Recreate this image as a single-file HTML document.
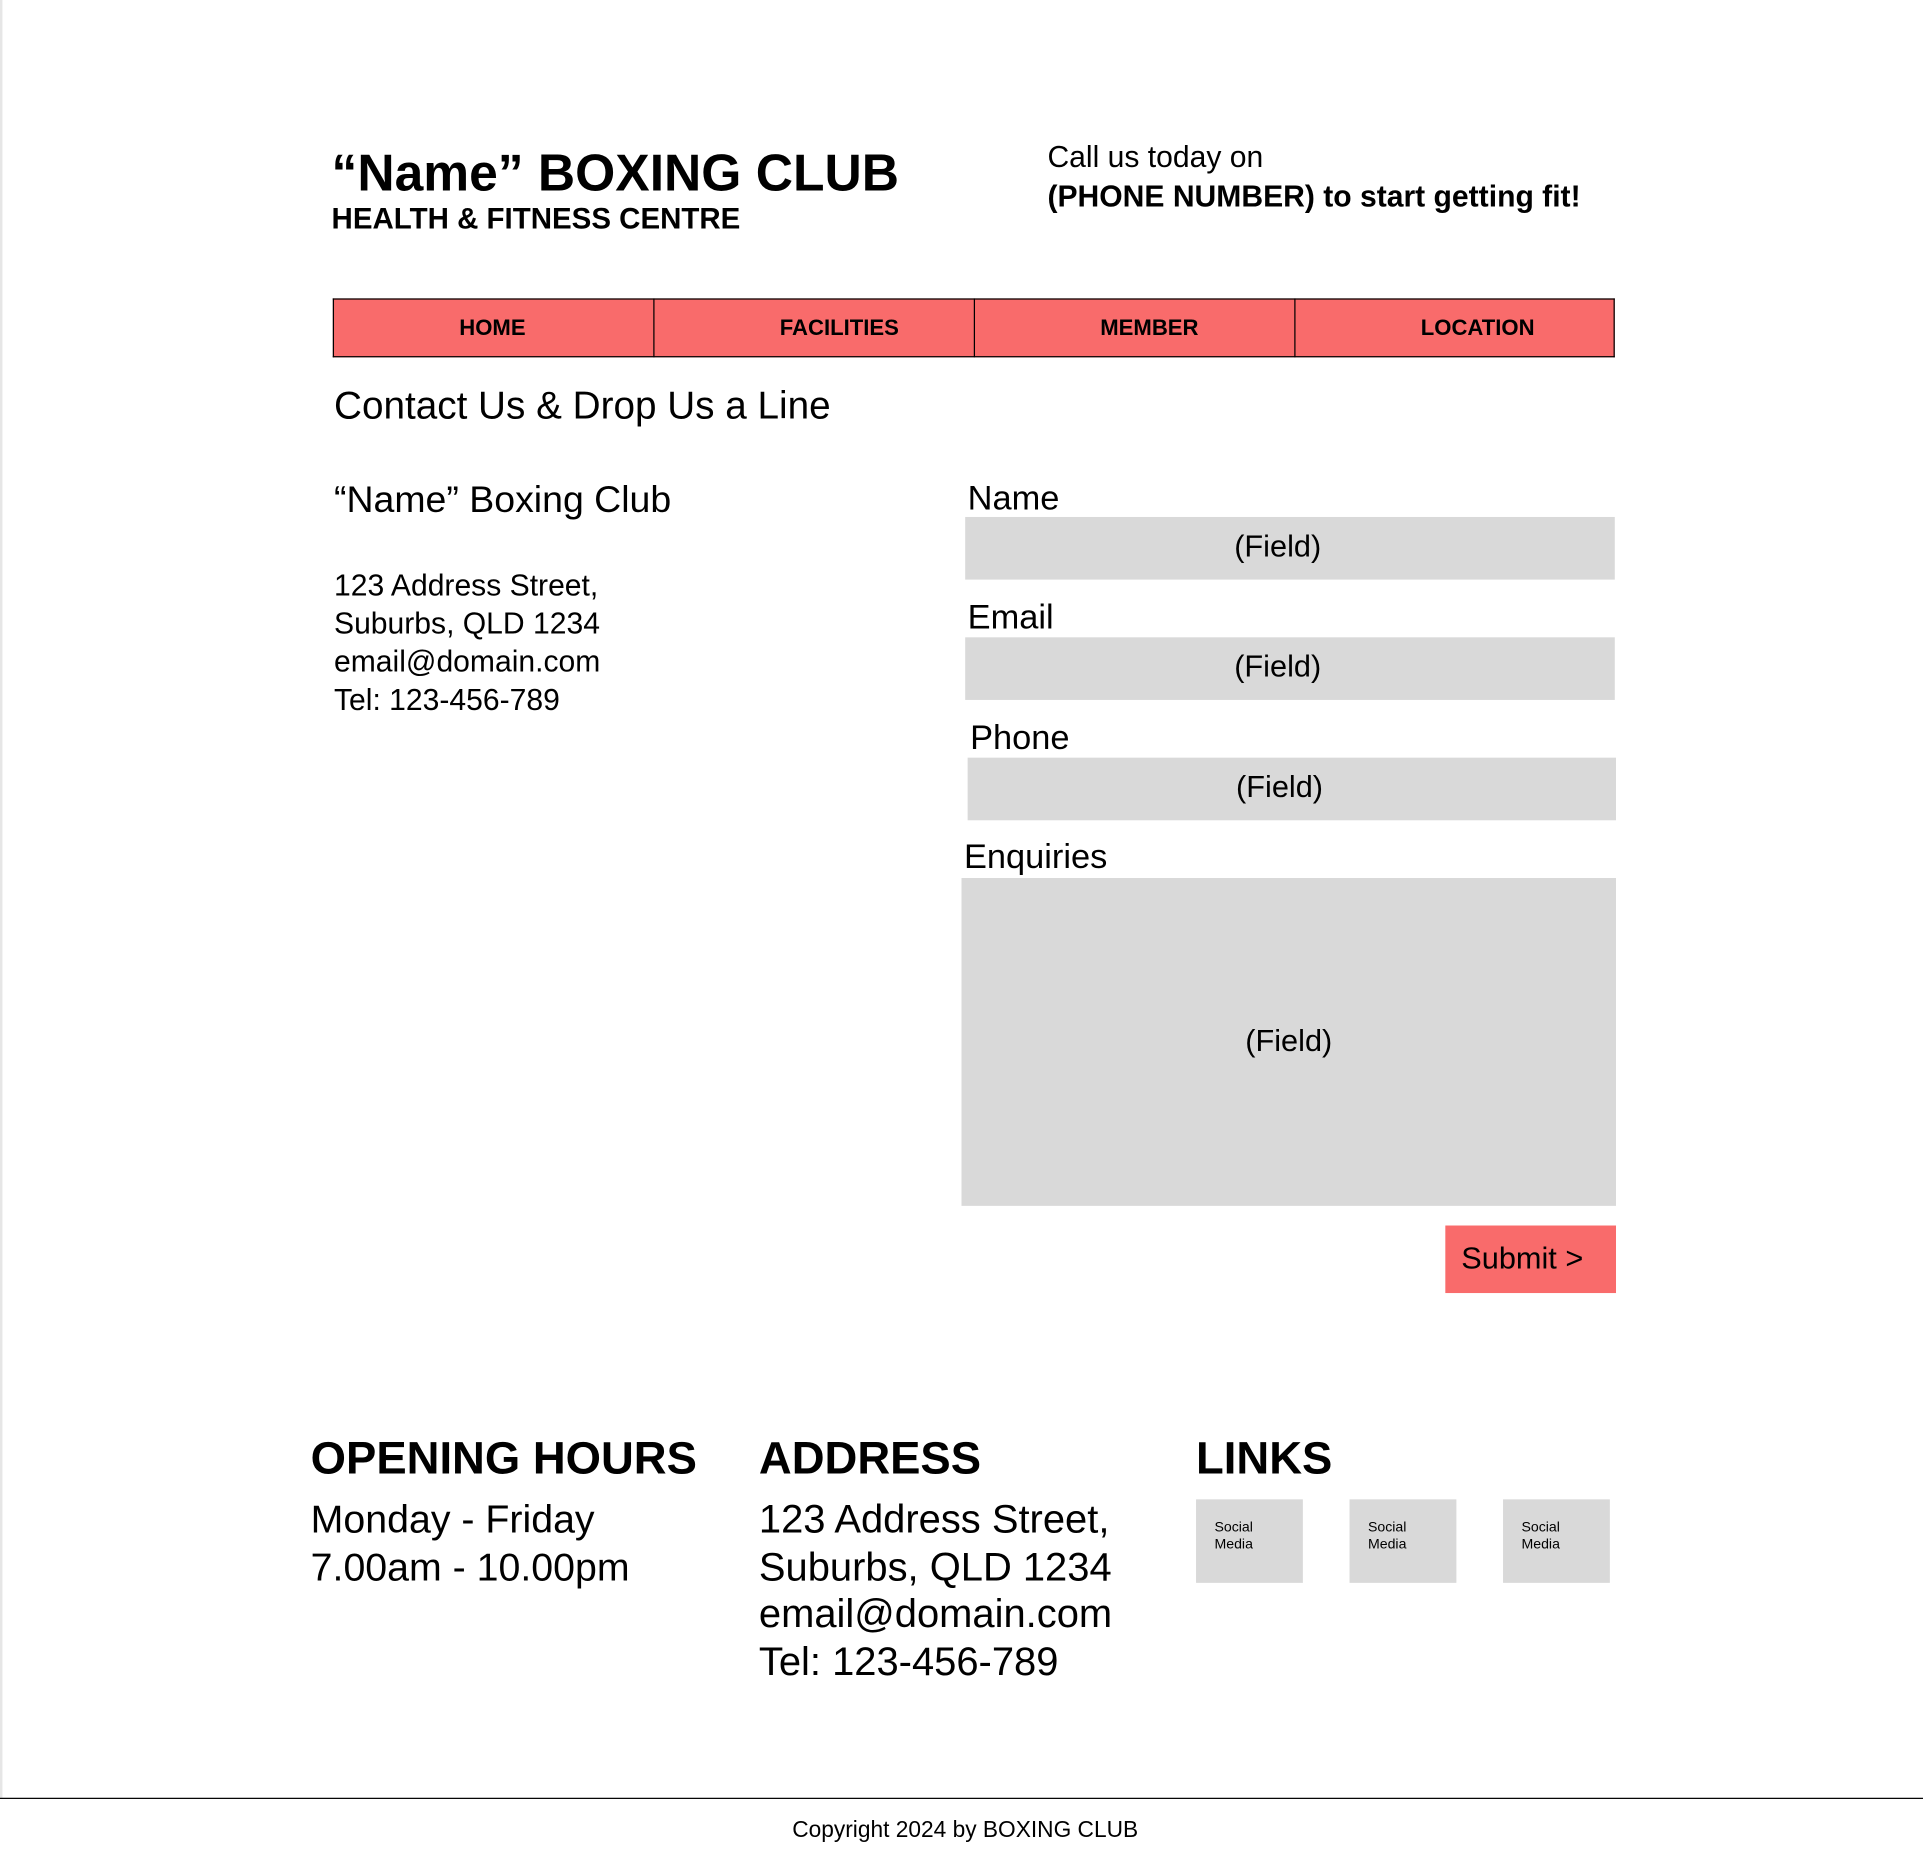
<!DOCTYPE html>
<html><head><meta charset="utf-8"><style>
html,body{margin:0;padding:0;background:#fff;}
body{width:1923px;height:1860px;overflow:hidden;position:relative;font-family:"Liberation Sans",Arial,sans-serif;color:#000;}
#w{position:absolute;left:0;top:0;width:1566px;height:1515px;transform:scale(1.22797);transform-origin:0 0;}
#w div{position:absolute;white-space:nowrap;line-height:1;}
.f{background:#d9d9d9;text-align:center;font-size:25px;}
.nav{top:243px;height:48px;background:#f96b6b;font-weight:bold;font-size:18px;}
.vl{top:243px;height:48px;width:1.2px;background:#000;}
.sm{background:#d9d9d9;width:87px;height:68px;top:1221px;}
.sm span{position:absolute;left:15px;top:16px;font-size:11.5px;line-height:14px;white-space:normal;}
</style></head><body><div id="w">
<div style="left:0;top:0;width:2px;height:1464px;background:#e6e6e6"></div>
<div style="left:270px;top:120px;font-size:42px;font-weight:bold">“Name” BOXING CLUB</div>
<div style="left:270px;top:167px;font-size:24px;font-weight:bold">HEALTH &amp; FITNESS CENTRE</div>
<div style="left:853px;top:117px;font-size:24.5px">Call us today on</div>
<div style="left:853px;top:149px;font-size:24.5px;font-weight:bold">(PHONE NUMBER) to start getting fit!</div>

<div class="nav" style="left:271px;width:1044px;border-top:1.2px solid #000;border-bottom:1.2px solid #000;box-sizing:border-box">
<div style="left:103px;top:14px">HOME</div>
<div style="left:364px;top:14px">FACILITIES</div>
<div style="left:625px;top:14px">MEMBER</div>
<div style="left:886px;top:14px">LOCATION</div>
</div>
<div class="vl" style="left:271px"></div>
<div class="vl" style="left:532px"></div>
<div class="vl" style="left:793px"></div>
<div class="vl" style="left:1054px"></div>
<div class="vl" style="left:1314px"></div>

<div style="left:272px;top:315px;font-size:31.5px">Contact Us &amp; Drop Us a Line</div>
<div style="left:272px;top:392px;font-size:30.5px">“Name” Boxing Club</div>
<div style="left:272px;top:462px;font-size:24.5px;line-height:31px;white-space:normal">123 Address Street,<br>Suburbs, QLD 1234<br>email@domain.com<br>Tel: 123-456-789</div>

<div style="left:788px;top:392px;font-size:28px">Name</div>
<div class="f" style="left:786px;top:421px;width:529px;height:51px;line-height:49px;text-indent:-20px">(Field)</div>
<div style="left:788px;top:489px;font-size:28px">Email</div>
<div class="f" style="left:786px;top:519px;width:529px;height:51px;line-height:49px;text-indent:-20px">(Field)</div>
<div style="left:790px;top:587px;font-size:28px">Phone</div>
<div class="f" style="left:788px;top:617px;width:528px;height:51px;line-height:49px;text-indent:-20px">(Field)</div>
<div style="left:785px;top:684px;font-size:28px">Enquiries</div>
<div class="f" style="left:783px;top:715px;width:533px;height:267px;line-height:267px">(Field)</div>
<div style="left:1177px;top:998px;width:139px;height:55px;background:#f96b6b;font-size:25px;line-height:55px;text-indent:13px">Submit &gt;</div>

<div style="left:253px;top:1169px;font-size:37px;font-weight:bold">OPENING HOURS</div>
<div style="left:618px;top:1169px;font-size:37px;font-weight:bold">ADDRESS</div>
<div style="left:974px;top:1169px;font-size:37px;font-weight:bold">LINKS</div>
<div style="left:253px;top:1218px;font-size:32px;line-height:39px;white-space:normal">Monday - Friday<br>7.00am - 10.00pm</div>
<div style="left:618px;top:1218px;font-size:32.5px;line-height:38.5px;white-space:normal">123 Address Street,<br>Suburbs, QLD 1234<br>email@domain.com<br>Tel: 123-456-789</div>
<div class="sm" style="left:974px"><span>Social<br>Media</span></div>
<div class="sm" style="left:1099px"><span>Social<br>Media</span></div>
<div class="sm" style="left:1224px"><span>Social<br>Media</span></div>

<div style="left:0;top:1464px;width:1566px;height:1px;background:#000"></div>
<div style="left:0;width:1572px;top:1481px;font-size:18.5px;text-align:center">Copyright 2024 by BOXING CLUB</div>
</div></body></html>
